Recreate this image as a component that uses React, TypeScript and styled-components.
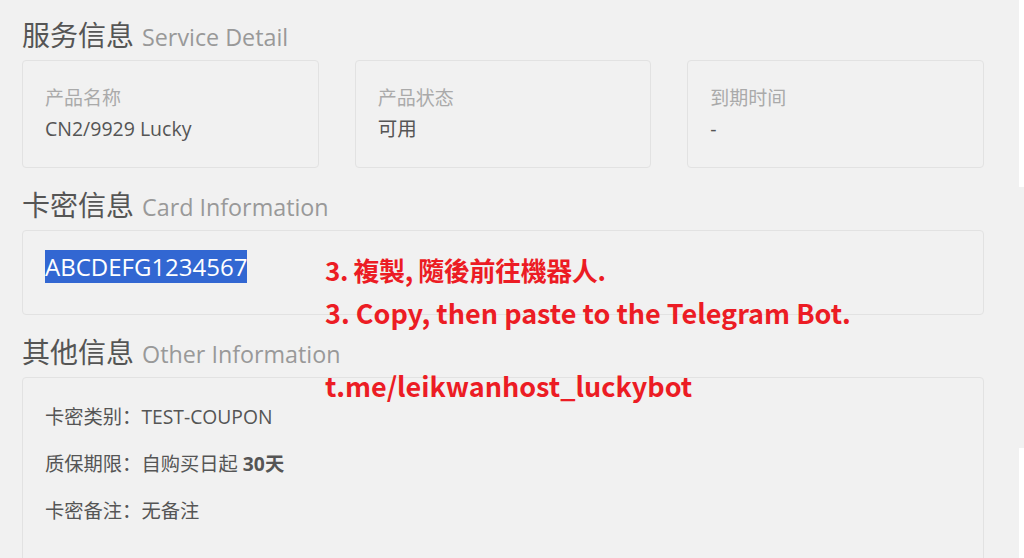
import React from "react";
import styled, { createGlobalStyle } from "styled-components";

const GlobalStyle = createGlobalStyle`
  html, body { margin: 0; padding: 0; background: #ffffff; }
  body { font-family: "Open Sans", "Noto Sans CJK SC", sans-serif; }
  * { box-sizing: border-box; }
`;

const Page = styled.div`
  position: relative;
  display: flex;
  width: 1024px;
  height: 558px;
  overflow: hidden;
`;

const Main = styled.main`
  width: 1019px;
  flex: none;
  background: #f1f1f1;
  padding: 15px 35px 0 22px;
`;

const EdgeStrip = styled.div`
  width: 5px;
  display: flex;
  flex-direction: column;
`;

const EdgeSegment = styled.div<{ $h?: number; $grey?: boolean }>`
  height: ${(p) => (p.$h ? `${p.$h}px` : "auto")};
  flex: ${(p) => (p.$h ? "none" : "1")};
  background: ${(p) => (p.$grey ? "#f1f1f1" : "#ffffff")};
`;

const Title = styled.h3<{ $first?: boolean }>`
  margin: ${(p) => (p.$first ? "0" : "17px")} 0 5px 0;
  height: 40px;
  line-height: 40px;
  font-size: 28px;
  font-weight: 400;
  color: #555555;
  white-space: nowrap;
`;

const Sub = styled.span`
  font-size: 23.3px;
  color: #999999;
  margin-left: 8px;
`;

const CardRow = styled.div`
  display: grid;
  grid-template-columns: repeat(3, 1fr);
  gap: 36px;
`;

const Box = styled.div`
  border: 1px solid #e2e2e2;
  border-radius: 4px;
  background: #f1f1f1;
`;

const StatBox = styled(Box)`
  height: 108px;
  padding: 24px 23px 0 22px;
  display: flex;
  flex-direction: column;
  gap: 5px;
`;

const StatLabel = styled.div`
  font-size: 19px;
  line-height: 26px;
  color: #aaaaaa;
`;

const StatValue = styled.div`
  font-size: 19.5px;
  line-height: 26px;
  color: #555555;
`;

const KeyBox = styled(Box)`
  height: 85px;
  padding: 20px 23px 0 22px;
`;

const KeyText = styled.span`
  font-size: 24px;
  line-height: 32px;
  color: #ffffff;
  background: #3267d2;
`;

const InfoBox = styled(Box)`
  height: 220px;
  padding: 25px 23px 0 22px;
  display: flex;
  flex-direction: column;
  gap: 20px;
`;

const InfoRow = styled.div`
  font-size: 19.3px;
  line-height: 27px;
  color: #555555;
`;

const Strong = styled.b`
  font-weight: 700;
`;

const Annotation = styled.div`
  position: absolute;
  left: 325px;
  top: 250px;
  display: flex;
  flex-direction: column;
  font-family: "Noto Sans CJK TC", "Noto Sans CJK SC", sans-serif;
  font-weight: 700;
  color: #ec1c24;
`;

const Note = styled.div<{ $gap?: number; $size: number; $tight?: boolean }>`
  font-size: ${(p) => p.$size}px;
  line-height: 40px;
  margin-top: ${(p) => p.$gap ?? 0}px;
  letter-spacing: ${(p) => (p.$tight ? "-0.4px" : "0")};
  white-space: nowrap;
`;

const stats = [
  { label: "产品名称", value: "CN2/9929 Lucky" },
  { label: "产品状态", value: "可用" },
  { label: "到期时间", value: "-" },
];

export default function App() {
  return (
    <>
      <GlobalStyle />
      <Page>
        <Main>
          <Title $first>
            服务信息<Sub>Service Detail</Sub>
          </Title>
          <CardRow>
            {stats.map((s) => (
              <StatBox key={s.label}>
                <StatLabel>{s.label}</StatLabel>
                <StatValue>{s.value}</StatValue>
              </StatBox>
            ))}
          </CardRow>

          <Title>
            卡密信息<Sub>Card Information</Sub>
          </Title>
          <KeyBox>
            <KeyText>ABCDEFG1234567</KeyText>
          </KeyBox>

          <Title>
            其他信息<Sub>Other Information</Sub>
          </Title>
          <InfoBox>
            <InfoRow>卡密类别：TEST-COUPON</InfoRow>
            <InfoRow>
              质保期限：自购买日起 <Strong>30天</Strong>
            </InfoRow>
            <InfoRow>卡密备注：无备注</InfoRow>
          </InfoBox>
        </Main>
        <EdgeStrip>
          <EdgeSegment $h={187} />
          <EdgeSegment $h={261} $grey />
          <EdgeSegment />
        </EdgeStrip>
        <Annotation>
          <Note $size={26} $tight>3. 複製, 隨後前往機器人.</Note>
          <Note $size={27} $gap={3}>3. Copy, then paste to the Telegram Bot.</Note>
          <Note $size={27} $gap={33}>t.me/leikwanhost_luckybot</Note>
        </Annotation>
      </Page>
    </>
  );
}
